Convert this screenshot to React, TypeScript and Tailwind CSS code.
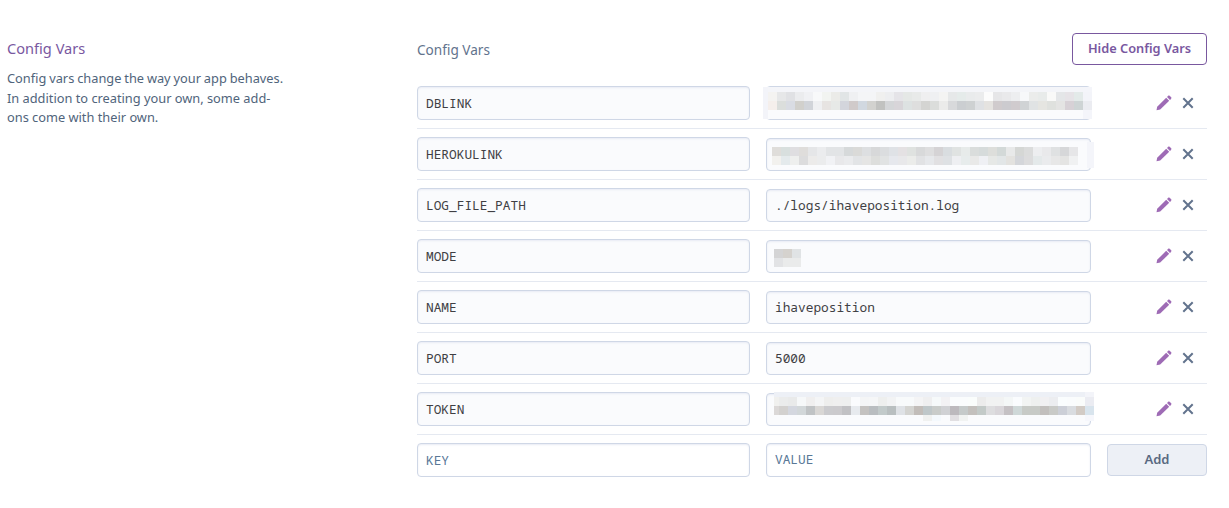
import React from "react";

type Mosaic = {
  left: number;
  top: number;
  bands: { height: number; cells: string }[];
  firstWidth?: number;
};

type ConfigVar = { name: string; value?: string; mosaic?: Mosaic; veil?: React.ReactNode };

const DBLINK: Mosaic = {
  left: 1,
  top: 5,
  bands: [
    {
      height: 9,
      cells:
        "f4f3f1 e6e7e8 e0e1e4 ebecee f0f1f4 f8f9fa f2f4f1 ebebe8 e1e5e6 eff0f2 f4f5f7 f4f5f7 f0f0ef edeef0 e5e4e8 e5e8e6 e8eae9 efeff0 eff0f2 f4f4f3 e6e8e9 e5ebea e9ebec ebeced fcfcfc e6e6e8 e9e9eb edeef0 f7f8fa ebeceb e8ebea f9f9f8 e4e6e8 e6e3e7 e3eae9 f3f4f9",
    },
    {
      height: 9,
      cells:
        "f5efec dbdedc d9dce3 d1d0cc d1d4d9 eff0f2 e7e4e2 e7e9e7 d3d5dc d0caca d1d8e0 d2d2cf c1c2c0 d4d6d8 d8d5d9 dde2e2 dedede d4d4d2 dbdddb ebebea d8d9db cbced1 ced1d2 dfe1e4 e5e3e0 d0cbcd cccbcf d0cbce d0d3d5 e0e3e4 e5e5e1 dfe1de e4e4e3 d7d1d6 ced4d5 ebecf1",
    },
  ],
};

const HEROKULINK: Mosaic = {
  left: 5,
  top: 8,
  bands: [
    {
      height: 9,
      cells:
        "dfddda d8dfde dfdee1 dfdddb e5e6e8 ebecee e2e4e6 e2e4e6 d6d9da dadad8 dddfe1 d7d8d9 dbdddf dfe2e6 e4e1e3 dfe2e0 d8d9da dededf d5d3d5 d9dde0 e0e3e2 e7ebea dadddc d6dbdb dddedb d3d9d8 e8e9e9 d5d7d5 dbdcdc edeef0 e9e9eb dfe1e2 d6d7d9 e6e6e8",
    },
    {
      height: 9,
      cells:
        "f2f1ee e4eaec eeefee dcdcdd ecebea ebeced f1f2f5 e8e8ea eaebed e2e4e6 e5e5e4 dddedc e1e3e3 e6e8ed e8e8ea ebecea e1e2e4 e6e8eb e1e0e2 dee1e4 eeeff2 e7ecec e9e9e8 eff0f4 e6e8e6 e2e6e7 e3e2df d4d6da dcdcdd e4e9ea eaebed e7e7e7 e4e4e3 f0f1f2",
    },
  ],
};

const MODE: Mosaic = {
  left: 7,
  top: 8,
  bands: [
    { height: 9, cells: "d4d4d5 d5d2ce e0e3e5" },
    { height: 9, cells: "e2e3e5 eaebeb eaebeb" },
  ],
};

const TOKEN: Mosaic = {
  left: 7,
  top: 3,
  firstWidth: 5,
  bands: [
    {
      height: 9,
      cells:
        "f0f0ee ebecec e9eaea f6f8f9 f0efef f4f5f6 eeeeed efefef eeefef fafbfd f4f5f6 f5f6f7 eeefee f2f3f4 f8fafb f8fafb f4f4f5 efeff0 f6f9fa f3f2f4 fafcfd fafcfd fafdfc ececec f1f2f2 f1f2f2 f4f7f7 fafcfe f2f4f3 eef0ef f1f0f2 ecedf0 fafdfe fafcfd fafcfb ebecf2",
    },
    {
      height: 9,
      cells:
        "dbd8d7 d3d1cf d4d7df d2d7d9 c0c3c5 d9d7d5 cbcbce cbcacd c1c1c4 e7eaee c4c2c0 b9bdc0 c2caca b9bfc0 dfe2e6 d4d4d1 c2bdb9 bfc7c9 c9ccca d0d1d4 bcb9bd c5caca c3c0bd c3cac8 dddddf d9d6da c5c1c4 cfd8d8 c7cac6 c7cac6 c2bfbd c9cac7 cccfd7 d9dce0 d2cbc5 d8e4ed",
    },
    {
      height: 6,
      cells:
        "fafbfd fafbfd fafbfd fafbfd fafbfd fafbfd fafbfd fafbfd fafbfd fafbfd fafbfd fafbfd fafbfd fafbfd fafbfd fafbfd fafbfd f0f1f0 f4f9fd fafbfd e1dfe2 f1f3f2 fafbfd fafbfd fafbfd fafbfd fafbfd fafbfd fafbfd fafbfd fafbfd fafbfd fafbfd fafbfd fafbfd f6f7fc",
    },
  ],
};

const VARS: ConfigVar[] = [
  {
    name: "DBLINK",
    mosaic: DBLINK,
    veil: (
      <>
        <div className="absolute -left-1 top-0 h-8 w-[329px] bg-[#fafbfd]" />
        <div className="absolute -left-1 top-0 h-[5px] w-[329px] bg-[#f4f5f9]" />
        <div className="absolute -left-1 top-0 h-8 w-[5px] bg-[#f3f4f9]" />
        <div className="absolute left-[316px] top-0 h-8 w-[9px] bg-[#f4f5fa]" />
      </>
    ),
  },
  {
    name: "HEROKULINK",
    mosaic: HEROKULINK,
    veil: <div className="absolute left-[320px] top-[3px] h-[26px] w-[7px] bg-[#f4f5fa]" />,
  },
  { name: "LOG_FILE_PATH", value: "./logs/ihaveposition.log" },
  { name: "MODE", mosaic: MODE },
  { name: "NAME", value: "ihaveposition" },
  { name: "PORT", value: "5000" },
  {
    name: "TOKEN",
    mosaic: TOKEN,
    veil: (
      <>
        <div className="absolute left-[7px] -top-0.5 h-[5px] w-[311px] bg-[#edf0f6]" />
        <div className="absolute left-[318px] -top-0.5 h-[5px] w-[9px] bg-[#f3f4f9]" />
      </>
    ),
  },
];

const FIELD =
  "relative rounded-[4px] border border-[#cfd7e6] px-2 font-['Noto_Sans_Mono','DejaVu_Sans_Mono',monospace] text-[12.8px] shadow-[inset_0_1px_2px_#e8ebf4]";

function Redaction({ mosaic }: { mosaic: Mosaic }) {
  return (
    <div className="absolute" style={{ left: mosaic.left, top: mosaic.top }}>
      {mosaic.bands.map((band, i) => (
        <div key={i} className="flex" style={{ height: band.height }}>
          {band.cells.split(" ").map((color, k) => (
            <span
              key={k}
              className="shrink-0"
              style={{
                width: k === 0 ? (mosaic.firstWidth ?? 9) : 9,
                backgroundColor: `#${color}`,
              }}
            />
          ))}
        </div>
      ))}
    </div>
  );
}

function Pencil() {
  return (
    <svg className="h-4 w-4" viewBox="0 0 16 16" fill="#9e6bb5">
      <path d="M.5 15.2 1.2 11.8 10.2 2.8 13.2 5.8 4.2 14.4Z" />
      <path d="m11 1.9 1-1c.6-.6 1.2-.6 1.8 0l1.2 1.2c.6.6.6 1.2 0 1.8l-1 1Z" />
    </svg>
  );
}

function Cross() {
  return (
    <svg className="h-3 w-3" viewBox="0 0 12 12" fill="none" stroke="#62738d" strokeWidth="2">
      <path d="m1.3 1.3 9.4 9.4m0-9.4-9.4 9.4" />
    </svg>
  );
}

function VarRow({ item, first }: { item: ConfigVar; first: boolean }) {
  return (
    <div className="mb-2 flex h-[43px] border-b border-[#e5e9f1]">
      <div className={`${FIELD} h-[34px] w-[333px] bg-[#fafbfd] leading-8 text-[#3f3f44]`}>
        {item.name}
      </div>
      <div
        className={`${FIELD} ml-4 w-[325px] bg-[#fafbfd] text-[#3f3f44] ${
          first ? "h-[34px] leading-8" : "mt-px h-[33px] leading-[30px]"
        }`}
      >
        {item.value}
        {item.veil}
        {item.mosaic && <Redaction mosaic={item.mosaic} />}
      </div>
      <div className="ml-[65px] flex h-[34px] items-center">
        <button aria-label={`Edit ${item.name}`}>
          <Pencil />
        </button>
        <button className="ml-2.5" aria-label={`Remove ${item.name}`}>
          <Cross />
        </button>
      </div>
    </div>
  );
}

export default function App() {
  return (
    <main className="flex h-[508px] w-[1229px] overflow-hidden bg-white pl-[7px] font-['Noto_Sans',sans-serif]">
      <aside className="w-[410px] pt-9">
        <h2 className="text-[14.6px] leading-6 text-[#79589f]">Config Vars</h2>
        <p className="mt-[9px] text-[12.8px] leading-[19.5px] text-[#50647b]">
          <span className="[word-spacing:-0.45px]">
            Config vars change the way your app behaves.
          </span>
          <br />
          In addition to creating your own, some add-
          <br />
          ons come with their own.
        </p>
      </aside>
      <section className="w-[790px] pt-[33px]">
        <header className="mb-[21px] flex h-8 justify-between">
          <h3 className="pt-1.5 text-[13.6px] leading-[22px] text-[#62738d]">Config Vars</h3>
          <button className="h-8 w-[135px] rounded-[4px] border border-[#79589f] text-[12.8px] font-semibold text-[#79589f]">
            Hide Config Vars
          </button>
        </header>
        {VARS.map((item, i) => (
          <VarRow key={item.name} item={item} first={i === 0} />
        ))}
        <div className="flex">
          <div className={`${FIELD} h-[34px] w-[333px] bg-white leading-8 text-[#597897]`}>KEY</div>
          <div className={`${FIELD} ml-4 h-[34px] w-[325px] bg-white leading-[30px] text-[#597897]`}>
            VALUE
          </div>
          <button className="ml-4 mt-px h-8 w-[100px] rounded-[4px] border border-[#cfd7e6] bg-[#edf0f6] text-[13px] font-semibold text-[#596981]">
            Add
          </button>
        </div>
      </section>
    </main>
  );
}
